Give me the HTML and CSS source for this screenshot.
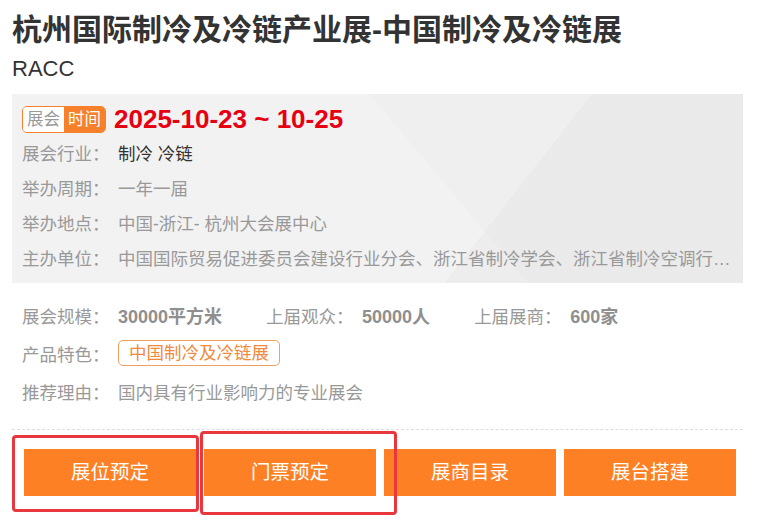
FILE: index.html
```html
<!DOCTYPE html>
<html lang="zh-CN">
<head>
<meta charset="UTF-8">
<meta name="viewport" content="width=device-width, initial-scale=1.0">
<title>杭州国际制冷及冷链产业展</title>
<link rel="stylesheet" href="styles.css">
</head>
<body>
<div class="expo">
    <h1 class="expo-title">杭州国际制冷及冷链产业展-中国制冷及冷链展</h1>
    <div class="expo-sub">RACC</div>

    <div class="info-box">
        <div class="date-row">
            <span class="badge"><span class="badge-l">展会</span><span class="badge-r">时间</span></span>
            <span class="date">2025-10-23 ~ 10-25</span>
        </div>
        <div class="info-row">
            <span class="label">展会行业：</span>
            <span class="value dark">制冷 冷链</span>
        </div>
        <div class="info-row">
            <span class="label">举办周期：</span>
            <span class="value">一年一届</span>
        </div>
        <div class="info-row">
            <span class="label">举办地点：</span>
            <span class="value">中国-浙江- 杭州大会展中心</span>
        </div>
        <div class="info-row">
            <span class="label">主办单位：</span>
            <span class="value">中国国际贸易促进委员会建设行业分会、浙江省制冷学会、浙江省制冷空调行业协会、杭州市制冷学会</span>
        </div>
    </div>

    <div class="stats">
        <div class="stat-row">
            <div class="stat"><span class="label">展会规模：</span><span class="num">30000平方米</span></div>
            <div class="stat"><span class="label">上届观众：</span><span class="num">50000人</span></div>
            <div class="stat"><span class="label">上届展商：</span><span class="num">600家</span></div>
        </div>
        <div class="stat-row">
            <span class="label">产品特色：</span>
            <span class="tag">中国制冷及冷链展</span>
        </div>
        <div class="stat-row">
            <span class="label">推荐理由：</span>
            <span class="value">国内具有行业影响力的专业展会</span>
        </div>
    </div>

    <div class="actions">
        <a class="btn" href="#">展位预定</a>
        <a class="btn" href="#">门票预定</a>
        <a class="btn" href="#">展商目录</a>
        <a class="btn" href="#">展台搭建</a>
    </div>

    <!-- highlight marks -->
    <div class="mark mark-1"></div>
    <div class="mark mark-2"></div>
</div>
</body>
</html>
```

FILE: styles.css
```css
html, body {
    height: 100%;
}
body {
    margin: 0;
    padding: 0;
    min-height: 522px;
    background-color: #fff;
    font-family: "Liberation Sans", "Noto Sans CJK SC", sans-serif;
    color: #333;
}
.expo {
    position: relative;
    width: 731px;
    padding: 12px 0 27px 12px;
}
.expo-title {
    margin: 0;
    font-size: 30px;
    line-height: 36px;
    font-weight: bold;
    color: #333;
    white-space: nowrap;
}
.expo-sub {
    margin-top: 7px;
    font-size: 22px;
    line-height: 28px;
    color: #333;
}
.info-box {
    margin-top: 11px;
    padding: 7px 10px 6px 10px;
    background-color: #efefef;
    background-image:
        linear-gradient(128deg, transparent 66%, rgba(0, 0, 0, 0.02) 66%),
        linear-gradient(50deg, rgba(255, 255, 255, 0.18) 0, rgba(255, 255, 255, 0.18) 58%, transparent 58%);
    font-size: 17.5px;
}
.date-row {
    display: flex;
    align-items: center;
    height: 36px;
}
.badge {
    display: flex;
    height: 27px;
    border: 1px solid #f7812b;
    border-radius: 5px;
    overflow: hidden;
    box-sizing: border-box;
    font-size: 16.5px;
    line-height: 25px;
}
.badge-l {
    padding: 0 4px;
    background-color: #fff;
    color: #999;
}
.badge-r {
    padding: 0 4px;
    background-color: #f7812b;
    color: #fff;
}
.date {
    margin-left: 8px;
    font-size: 26px;
    font-weight: bold;
    color: #e60012;
}
.info-row {
    display: flex;
    height: 35px;
    line-height: 35px;
}
.label {
    flex-shrink: 0;
    width: 88px;
    margin-right: 8px;
    color: #999;
    font-size: 17.5px;
}
.value {
    color: #999;
    white-space: nowrap;
    overflow: hidden;
    text-overflow: ellipsis;
    min-width: 0;
}
.value.dark {
    color: #333;
}
.stats {
    margin-top: 13px;
    padding: 0 10px 19px 10px;
    border-bottom: 1px dashed #ddd;
    font-size: 17.5px;
}
.stat-row {
    display: flex;
    align-items: center;
    height: 38px;
}
.stat {
    display: flex;
    align-items: center;
    margin-right: 44px;
}
.num {
    font-size: 18px;
    font-weight: bold;
    color: #8f8f8f;
}
.tag {
    display: inline-block;
    padding: 0 10px;
    height: 26px;
    line-height: 24px;
    box-sizing: border-box;
    border: 1px solid #f0a062;
    border-radius: 5px;
    color: #f08a3c;
    font-size: 17.5px;
}
.actions {
    display: grid;
    grid-template-columns: repeat(4, 1fr);
    gap: 8px;
    padding: 19px 7px 0 12px;
}
.btn {
    display: block;
    height: 47px;
    line-height: 47px;
    background-color: #fd8024;
    color: #fff;
    text-align: center;
    font-size: 19.5px;
    text-decoration: none;
}
.mark {
    position: absolute;
    border: 3px solid #e8383d;
    border-radius: 4px;
    box-sizing: border-box;
}
.mark-1 {
    left: 12px;
    top: 435px;
    width: 187px;
    height: 77px;
}
.mark-2 {
    left: 200px;
    top: 431px;
    width: 197px;
    height: 84px;
}
```
